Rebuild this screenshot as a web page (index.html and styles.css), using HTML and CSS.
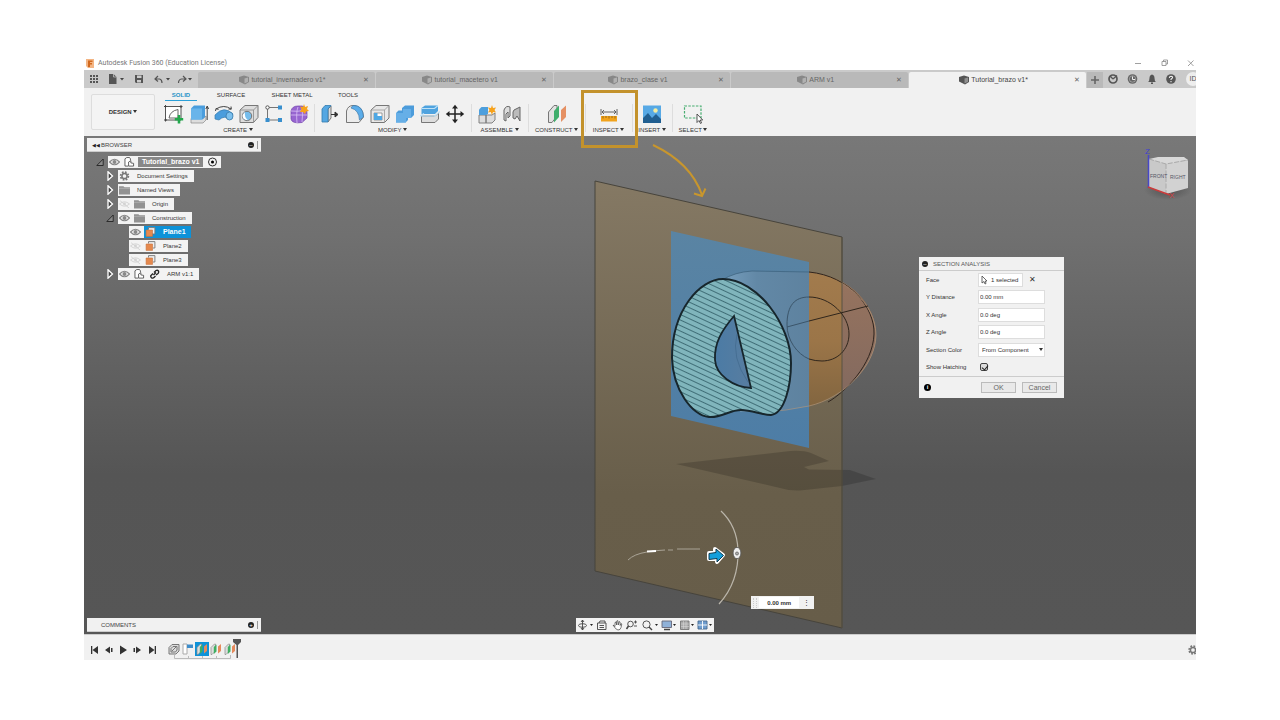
FILE: index.html
```html
<!DOCTYPE html>
<html lang="en">
<head>
<meta charset="utf-8">
<title>Autodesk Fusion 360 (Education License)</title>
<link rel="stylesheet" href="styles.css">
</head>
<body>
<svg class="defs" aria-hidden="true">
  <symbol id="cube" viewBox="0 0 10 10"><path d="M0 2 5 0.5 10 2V7L6 9.5 0 6.5Z" fill="currentColor"/><path d="M5.5 3.5 9 2.6V6.7L5.5 8.6Z" fill="#fff" opacity=".35"/></symbol>
  <symbol id="eye" viewBox="0 0 10 8"><path d="M.5 4Q5-1 9.500 4 5 9 .5 4Z" fill="none" stroke="#888" stroke-width="1.100"/><circle cx="5" cy="4" r="1.800" fill="#888"/></symbol>
  <symbol id="eye-off" viewBox="0 0 10 8"><path d="M.5 4Q5 0 9.500 4 5 8 .5 4ZM1 1 9 7.500" fill="none" stroke="#d3d3d3" stroke-width=".9"/><circle cx="5" cy="4" r="1.300" fill="#d3d3d3"/></symbol>
  <symbol id="folder" viewBox="0 0 10 9"><path d="M0 1H4L5 2H10V8.500H0Z" fill="#929292"/><path d="M0 3H10" stroke="#bbb" stroke-width=".6"/></symbol>
  <symbol id="comp" viewBox="0 0 12 11"><path d="M4.500 10H1V2L3 .6H6L7 2V3.500M5 5.500 7.500 4V6.500L10.500 7V10H5Z" fill="#fff" stroke="#444" stroke-width=".9"/></symbol>
  <symbol id="plane" viewBox="0 0 10 10"><path d="M3 2.500V.6H9.400V7H7.500" fill="#eee" stroke="#777" stroke-width=".9"/><path d="M.6 3H7V9.400H.6Z" fill="#e5894e" stroke="#c9713b" stroke-width=".6"/></symbol>
  <symbol id="gear" viewBox="0 0 10 10"><circle cx="5" cy="5" r="3.900" fill="none" stroke="#777" stroke-width="1.700" stroke-dasharray="1.700 1.360"/><circle cx="5" cy="5" r="2.600" fill="none" stroke="#777" stroke-width="1.500"/></symbol>
  <symbol id="closed" viewBox="0 0 8 10"><path d="M2 .8 6.500 5 2 9.200Z" fill="#444" stroke="#fff" stroke-width="1.300"/></symbol>
  <symbol id="open" viewBox="0 0 8 10"><path d="M.8 8.500 7.200 2V8.500Z" fill="#888" stroke="#222" stroke-width=".9"/></symbol>
  <symbol id="feat" viewBox="0 0 12 12"><path d="M1 4.500 4.500 1H5.500V8L2 11.500H1Z" fill="#ddd" stroke="#888" stroke-width=".7"/><path d="M3.800 4 6.500 1.500V8.500L3.800 11Z" fill="#3fae62"/><path d="M8 3.500 11 1V8L8 10.500Z" fill="#e58a5c"/></symbol>
</svg>
<main class="app">
  <header class="titlebar">
    <svg class="logo" viewBox="0 0 8 9"><path d="M0 0H8V9H2L0 7Z" fill="#f3b584"/><path d="M2 1.500H6.500V3H4V4H6V5.500H4V8H2Z" fill="#d2691e"/></svg>
    <span class="caption">Autodesk Fusion 360 (Education License)</span>
    <svg class="winbtns" viewBox="0 0 60 10" fill="none" stroke="#888" stroke-width=".8"><path d="M1 5.500H7M28 3.500H32V7.500H28ZM29.500 3.500V2H33.500V6H32M54 2.500 59.500 8M59.500 2.500 54 8"/></svg>
  </header>

  <nav class="tabbar">
    <div class="quick">
      <svg viewBox="0 0 114 18"><path d="M6 5h2v2H6zM9 5h2v2H9zM12 5h2v2h-2zM6 8h2v2H6zM9 8h2v2H9zM12 8h2v2h-2zM6 11h2v2H6zM9 11h2v2H9zM12 11h2v2h-2z" fill="#555"/><path d="M25 4H29.500L32.500 7V14H25Z" fill="#555"/><path d="M29.500 4V7H32.500" fill="none" stroke="#ccc" stroke-width=".7"/><path d="M36 8H40L38 10.500ZM82 8H86L84 10.500ZM104 8H108L106 10.500Z" fill="#444"/><path d="M51 5H59V13H52L51 12Z" fill="#555"/><path d="M53 5.500H57.500V8H53ZM53 10H57V12.500H53Z" fill="#ccc"/><path d="M74 6 71 9 74 11.500M71 9H75.500Q78 9.500 78 13M99 6 102 9 99 11.500M102 9H97.500Q94.500 9.500 94.500 13" fill="none" stroke="#555" stroke-width="1.200"/></svg>
    </div>
    <div class="tab"><svg class="i10"><use href="#cube"/></svg><span>tutorial_invernadero v1*</span><button class="x" aria-label="Close">✕</button></div>
    <div class="tab"><svg class="i10"><use href="#cube"/></svg><span>tutorial_macetero v1</span><button class="x" aria-label="Close">✕</button></div>
    <div class="tab"><svg class="i10"><use href="#cube"/></svg><span>brazo_clase v1</span><button class="x" aria-label="Close">✕</button></div>
    <div class="tab"><svg class="i10"><use href="#cube"/></svg><span>ARM v1</span><button class="x" aria-label="Close">✕</button></div>
    <div class="tab current"><svg class="i10"><use href="#cube"/></svg><span>Tutorial_brazo v1*</span><button class="x" aria-label="Close">✕</button></div>
    <button class="plus" aria-label="New tab"><svg viewBox="0 0 8 8"><path d="M4 0V8M0 4H8" stroke="#666" stroke-width="1.600"/></svg></button>
    <div class="status">
      <svg viewBox="0 0 90 18"><circle cx="9" cy="9" r="4" fill="none" stroke="#555" stroke-width="1.700"/><path d="M9 9 13 5.500M6 6 9 9" stroke="#555" stroke-width="1.300"/><circle cx="28.500" cy="9" r="4.800" fill="#666"/><circle cx="28.500" cy="9" r="3.200" fill="none" stroke="#bbb" stroke-width=".6"/><path d="M28.500 6.500V9.500H31" fill="none" stroke="#eee"/><path d="M44 12Q45.500 11 45.500 8 45.500 5 48 4.500 50.500 5 50.500 8 50.500 11 52 12ZM47 12.500H49V14H47Z" fill="#555"/><circle cx="67" cy="9" r="4.800" fill="#555"/><path d="M65.300 8Q65.500 6.200 67 6.200 68.800 6.400 68.500 7.800L67 9.300V10M67 11V12.200" fill="none" stroke="#eee" stroke-width="1.100"/></svg>
      <span class="avatar">ID</span>
    </div>
  </nav>

  <section class="ribbon">
    <button class="design">DESIGN <i class="caret"></i></button>
    <div class="tools">
      <div class="subtabs"><button class="sub on">SOLID</button><button class="sub">SURFACE</button><button class="sub wide">SHEET METAL</button><button class="sub">TOOLS</button></div>
      <div class="groups">
        <div class="group create"><div class="icons">
          <svg viewBox="0 0 20 20"><path d="M1.500 2.500H17V16H1.500Z" fill="#fff" stroke="#555"/><path d="M5 14Q6 7 14 5.500V14Z" fill="none" stroke="#555" stroke-width=".9"/><path d="M0 2.500H3M1.500 1V4M15.500 2.500H18.500M17 1V4M0 16H3M1.500 14.500V17.500" stroke="#444"/><path d="M15 11V19.500M10.800 15.200H19.200" stroke="#22a84c" stroke-width="2.600"/></svg>
          <svg viewBox="0 0 20 20"><path d="M2 14.500H14L17 12V16L14 19H2Z" fill="#ddd" stroke="#888" stroke-width=".7"/><path d="M2 4.500 5 1.500H16V13L13.500 15.500H2Z" fill="#4a9ddd"/><path d="M2 4.500H13V15.500H2Z" fill="#69b4ea"/><path d="M18.200 16V3M16.800 5 18.200 2 19.600 5" fill="none" stroke="#333" stroke-width=".9"/></svg>
          <svg viewBox="0 0 20 20"><path d="M1 11Q10 1 19 10L16 15Q10 11 5 16L1 15Z" fill="#4a9ddd" stroke="#397cae" stroke-width=".7"/><ellipse cx="15.500" cy="12" rx="3.500" ry="4" fill="#7bc0ee" stroke="#3979a8" stroke-width=".8"/><path d="M2 5Q10 0 17 5M1.500 7 2 4.500 4.500 5.500M14.500 5 17.300 5.200 17 2.500" fill="none" stroke="#444"/></svg>
          <svg viewBox="0 0 20 20"><path d="M1 6 6 1.500H19V13.500L14.500 18.500H1Z" fill="#ddd" stroke="#777"/><path d="M1 6H14.500V18.500M14.500 6 19 1.500" fill="none" stroke="#888" stroke-width=".8"/><circle cx="8" cy="12" r="4.700" fill="#76bdec" stroke="#777"/><path d="M6 8Q5 13 9 16.300 3 16 3.500 11Z" fill="#fff"/></svg>
          <svg viewBox="0 0 20 20"><path d="M4 3.500H15M3.500 4V16M4 16H15" fill="none" stroke="#666" stroke-width=".9"/><circle cx="3.500" cy="3.500" r="1.700" fill="#fff" stroke="#555"/><path d="M14 1.500H18V5.500H14ZM1.500 14H5.500V18H1.500ZM14 14H18V18H14Z" fill="#388fce"/></svg>
          <svg viewBox="0 0 20 20"><path d="M2 7Q3 2 9 2H13Q18 3 18 9V14L13 18.500Q3 20 2 15Z" fill="#9765d0" stroke="#7445ae" stroke-width=".7"/><path d="M2 11H18M9 3Q7 8 8 19M13 5Q14 10 13 18M2 7Q8 8 17 6" fill="none" stroke="#dac2f6" stroke-width=".8"/><path d="M15 0 16 3 19 2 18 5 20 7 17 7.500 16 10 14 8 11 8 12.500 5 11 2.500 14 3Z" fill="#f7a21b"/></svg>
        </div><button class="label">CREATE <i class="caret"></i></button></div>
        <div class="group modify"><div class="icons">
          <svg viewBox="0 0 20 20"><path d="M8 5 11 2V14L8 18Z" fill="#ddd" stroke="#777"/><path d="M2 5 5 1.500H11L8 5V18H2Z" fill="#55a7e2" stroke="#347baf" stroke-width=".8"/><path d="M11 10.500H17M15 8 18 10.500 15 13Z" fill="#333" stroke="#333"/></svg>
          <svg viewBox="0 0 20 20"><path d="M1.500 7Q3 1.500 8 1.500H10Q18 3 18.500 13L14 18.500H1.500Z" fill="#ececec" stroke="#777"/><path d="M8 1.500Q18 1 18.500 13L14.500 16Q14 6 6 4Z" fill="#5badea" stroke="#417baa" stroke-width=".7"/></svg>
          <svg viewBox="0 0 20 20"><path d="M1 6 6 1.500H19V14L14.500 18.500H1Z" fill="#e8e8e8" stroke="#777"/><path d="M14.500 18V6H1M14.500 6 19 1.500" stroke="#999" fill="none" stroke-width=".8"/><path d="M4 9H12V16H4Z" fill="#fff" stroke="#888" stroke-width=".8"/><path d="M4 9H7.500V12H12V16H4Z" fill="#4fa8e4"/></svg>
          <svg viewBox="0 0 20 20"><path d="M1 9 3.500 6.500H7V4L10 1.500H19V11L16 14H13V16L10.500 18.500H1Z" fill="#4c9cdb"/><path d="M1 9H8V5H16V14H11V18.500H1Z" fill="#66afe7"/></svg>
          <svg viewBox="0 0 20 20"><path d="M1.500 12H15L18.500 9V15L15 18.500H1.500Z" fill="#ddd" stroke="#777"/><path d="M1.500 4 5 1.500H18V7L15 10H1.500Z" fill="#4fa3df"/><path d="M1.500 4.500H14.500L18 1.500M0 12 4 9.500M14 12.500 20 7.500M1 12H15" stroke="#bde1f7" fill="none" stroke-width="1.200"/></svg>
          <svg viewBox="0 0 20 20"><path d="M10 3V17M3 10H17" stroke="#222" stroke-width="1.500"/><path d="M10 .8 13 4.500H7ZM10 19.200 13 15.500H7ZM.8 10 4.500 7V13ZM19.200 10 15.500 7V13Z" fill="#222"/></svg>
        </div><button class="label">MODIFY <i class="caret"></i></button></div>
        <div class="group"><div class="icons">
          <svg viewBox="0 0 20 20"><path d="M2 11H9V19H2ZM9 11H15L18 9V16L15 19H9Z" fill="#ddd" stroke="#777" stroke-width=".9"/><path d="M2 5.500 4.500 3H11V9.500L9.500 11H2Z" fill="#4d9fdd"/><path d="M15 1 16 4 19 3.500 17.500 6 19 8.500 16 8 15 11 13.800 8 11 8.500 12.500 6 11 3.500 14 4Z" fill="#f7a21b"/></svg>
          <svg viewBox="0 0 20 20"><path d="M2 6Q4 1 8 3V12L6 14V8L4 10V17L2 16Z" fill="#ddd" stroke="#666"/><path d="M18 3 12 6 11 8V14L13 15 15 12 18 17Z" fill="#bbb" stroke="#666"/></svg>
        </div><button class="label">ASSEMBLE <i class="caret"></i></button></div>
        <div class="group"><div class="icons"><svg viewBox="0 0 20 20"><path d="M1.500 8 7 1.500H10V12L5 18.500H1.500Z" fill="#e2e2e2" stroke="#777"/><path d="M7 7 12 1.500V13L7 18.500Z" fill="#3fae6c"/><path d="M14 6 19 1.500V13L14 18Z" fill="#e59063"/></svg></div><button class="label">CONSTRUCT <i class="caret"></i></button></div>
        <div class="group inspect"><div class="icons"><svg viewBox="0 0 20 20"><path d="M2 5V11M18 5V11M3 8H17M5 6 3 8 5 10M15 6 17 8 15 10" fill="none" stroke="#555" stroke-width=".9"/><path d="M2 12H18V17.500H2Z" fill="#f1a31c"/><path d="M4 12V14.500M7 12V14M10 12V14.500M13 12V14M16 12V14.500" stroke="#865d17" stroke-width=".8"/></svg></div><button class="label">INSPECT <i class="caret"></i></button><div class="marker"></div></div>
        <div class="group insert"><div class="icons"><svg viewBox="0 0 20 20"><path d="M1 1.500H19V19H1Z" fill="#57a9e5"/><path d="M1 14 6 9 10 14 14 10 19 15V19H1Z" fill="#215f91"/><circle cx="13.500" cy="6.500" r="2.200" fill="#f4eda2"/></svg></div><button class="label">INSERT <i class="caret"></i></button></div>
        <div class="group select"><div class="icons"><svg viewBox="0 0 20 20"><path d="M1.500 2H18V14H1.500Z" fill="none" stroke="#47ad70" stroke-width="1.200" stroke-dasharray="2.500 1.300"/><path d="M14 10V18.500L16 16.500 17.500 19.500 18.500 19 17.300 16H19.700Z" fill="#fff" stroke="#444" stroke-width=".9"/></svg></div><button class="label">SELECT <i class="caret"></i></button></div>
      </div>
    </div>
  </section>

  <section class="canvas">
    <svg class="scene" viewBox="84 136 1112 498">
      <defs>
        <linearGradient id="tan" x1="0" y1="0" x2="0" y2="1"><stop offset="0" stop-color="#857964"/><stop offset=".7" stop-color="#685e4a"/><stop offset="1" stop-color="#675d49"/></linearGradient>
        <linearGradient id="skin" x1="0" y1="0" x2="0" y2="1"><stop offset="0" stop-color="#a27b4d"/><stop offset=".5" stop-color="#9b7548"/><stop offset="1" stop-color="#80643f"/></linearGradient>
        <linearGradient id="skinout" x1="0" y1="0" x2="0" y2="1"><stop offset="0" stop-color="#98745e"/><stop offset="1" stop-color="#80685f"/></linearGradient>
        <linearGradient id="blue" x1="0" y1="0" x2="0" y2="1"><stop offset="0" stop-color="#5a84a3"/><stop offset="1" stop-color="#4d7da6"/></linearGradient>
        <linearGradient id="hollow" x1="0" y1="0" x2="1" y2="0"><stop offset="0" stop-color="#4b7ba5"/><stop offset="1" stop-color="#587da0"/></linearGradient>
        <linearGradient id="sheen" x1="0" y1="0" x2="1" y2="0"><stop offset="0" stop-color="#779fbe"/><stop offset=".4" stop-color="#6288a6"/><stop offset="1" stop-color="#5e829f"/></linearGradient>
        <pattern id="hatch" width="20" height="5" patternUnits="userSpaceOnUse" patternTransform="rotate(25)"><rect width="20" height="5" fill="#80b5bc"/><path d="M0 2.500H20" stroke="#305c66" stroke-width=".8"/></pattern>
        <clipPath id="past"><path d="M842 237H900V450H842Z"/></clipPath>
        <clipPath id="inblue"><path d="M671 231 809 262V448L671 416Z"/></clipPath>
        <radialGradient id="glow" cx=".5" cy=".5" r=".5"><stop offset="0" stop-opacity=".3"/><stop offset="1" stop-opacity="0"/></radialGradient>
      </defs>
      <path d="M595 181 842 237V628L595 571Z" fill="url(#tan)" stroke="#47443c"/>
      <path d="M676 464 790 451Q803 450 811 453L829 461 804 467 809 469.500 850 470 876 479 842 486 800 490.500Q790 491 780 488Z" opacity=".17"/>
      <path d="M722 280Q735 272 752 271L809 272C850 276 876 305 876 335 876 365 844 398 809 406Q785 411 740 412Z" fill="url(#skin)"/>
      <path d="M722 280Q735 272 752 271L809 272C850 276 876 305 876 335 876 365 844 398 809 406Q785 411 740 412Z" fill="url(#skinout)" clip-path="url(#past)"/>
      <path d="M671 231 809 262V448L671 416Z" fill="url(#blue)"/>
      <path d="M722 280Q735 272 752 271L809 272V406Q785 411 740 412Z" fill="url(#sheen)" clip-path="url(#inblue)"/>
      <path d="M722 280Q735 272 752 271L809 272" fill="none" stroke="#3f6580" stroke-width=".8"/>
      <path d="M809 272C850 276 875 308 874 334 873 365 844 393 828 402" fill="none" stroke="#30251e"/>
      <path d="M842 283C865 298 876 316 876 336 875 366 844 398 809 406Q785 411 765 412" fill="none" stroke="#b3977c" stroke-width=".8" opacity=".8"/>
      <path d="M842 237V628" stroke="#595343"/>
      <path d="M809 359C797 354 787 340 787 325 787 305 795 297 809 297M787 327 809 321" fill="none" stroke="#3b556a"/>
      <path d="M809 297C830 297 849 315 849 334 849 350 837 361 822 361Q815 361 809 359M809 321 868 306" fill="none" stroke="#30261c"/>
      <path d="M723 279C700 279 672 310 672 358 673 390 692 415 709 417 722 418 729 410 741 410 752 410 762 415 771 415 785 413 791 385 791 363 791 325 757 279 723 279Z" fill="url(#hatch)" stroke="#17262c" stroke-width="2"/>
      <path d="M734 316C722 330 714 343 715 360 716 375 733 387 751 388Z" fill="url(#hollow)" stroke="#17262c" stroke-width="1.800"/>
      <path d="M737 334Q731 358 748 382" fill="none" stroke="#41688c" stroke-width=".7"/>
      <path d="M653 145Q691 163 702 195M694 193.500 702 196 705.500 188.500" fill="none" stroke="#c8962d" stroke-width="2"/>
      <g fill="none" stroke="#bab5aa"><path d="M721 511Q737 526 738 550Q739 582 719 604" stroke-width="1.200"/><path d="M628 560Q634 554 647 552M652 551 665 550M668 550H673M677 549H700" stroke-width=".8"/><path d="M647 551.500 656 551" stroke="#fff" stroke-width="2"/></g>
      <path d="M709 553H715V549L723 555 717 562V559H709Z" fill="#fff" stroke="#fff" stroke-width="4" stroke-linejoin="round"/><path d="M709 553.500 716 552.500V549L723.500 555.500 717 562V558.500L709 559.500Z" fill="#149fdc" stroke="#113b50"/>
      <ellipse cx="737" cy="553" rx="3.900" ry="5.600" fill="#eee" stroke="#555" stroke-width=".8"/><circle cx="737" cy="553.500" r="1.500" fill="#aaa" stroke="#666" stroke-width=".8"/>
      <ellipse cx="1168" cy="190" rx="24" ry="10" fill="url(#glow)"/>
      <path d="M1149 159 1158 157H1184L1188 160 1166 165Z" fill="#d8d8d8"/><path d="M1149 159 1166 164V194L1149 187Z" fill="#c9c9c9"/><path d="M1166 164 1188 160V188L1166 194Z" fill="#d2d2d2"/><path d="M1149 159 1166 164 1188 160M1166 164V194" fill="none" stroke="#aaa" stroke-dasharray="5 1.500"/>
      <path d="M1148.500 155V188" stroke="#4747c8" stroke-width="1.500"/><path d="M1148 187 1170 195" stroke="#cb3a3a" stroke-width="1.500"/>
      <g class="axes"><text x="1145" y="154" fill="#4141cf">Z</text><text x="1169" y="198" fill="#d23d3d">X</text></g>
      <g class="faces"><text x="1150" y="178">FRONT</text><text x="1170" y="179">RIGHT</text></g>
    </svg>

    <aside class="browser">
      <div class="panelhead"><span class="rew">◀◀</span><span>BROWSER</span><i class="dot">–</i><i class="grip"></i></div>
      <ul class="tree">
        <li><svg class="tw"><use href="#open"/></svg><div class="node"><svg class="ic"><use href="#eye"/></svg><svg class="ic"><use href="#comp"/></svg><span class="root">Tutorial_brazo v1</span><svg class="ic" viewBox="0 0 10 10"><circle cx="5" cy="5" r="4" fill="none" stroke="#333"/><circle cx="5" cy="5" r="1.500"/></svg></div></li>
        <li class="l1"><svg class="tw"><use href="#closed"/></svg><div class="node"><svg class="ic"><use href="#gear"/></svg><span>Document Settings</span></div></li>
        <li class="l1"><svg class="tw"><use href="#closed"/></svg><div class="node"><svg class="ic"><use href="#folder"/></svg><span>Named Views</span></div></li>
        <li class="l1"><svg class="tw"><use href="#closed"/></svg><div class="node"><svg class="ic"><use href="#eye-off"/></svg><svg class="ic"><use href="#folder"/></svg><span>Origin</span></div></li>
        <li class="l1"><svg class="tw"><use href="#open"/></svg><div class="node"><svg class="ic"><use href="#eye"/></svg><svg class="ic"><use href="#folder"/></svg><span>Construction</span></div></li>
        <li class="l2"><div class="node"><svg class="ic"><use href="#eye"/></svg><div class="picked"><svg class="ic"><use href="#plane"/></svg><span>Plane1</span></div></div></li>
        <li class="l2"><div class="node"><svg class="ic"><use href="#eye-off"/></svg><svg class="ic"><use href="#plane"/></svg><span>Plane2</span></div></li>
        <li class="l2"><div class="node"><svg class="ic"><use href="#eye-off"/></svg><svg class="ic"><use href="#plane"/></svg><span>Plane3</span></div></li>
        <li class="l1"><svg class="tw"><use href="#closed"/></svg><div class="node"><svg class="ic"><use href="#eye"/></svg><svg class="ic"><use href="#comp"/></svg><svg class="ic" viewBox="0 0 10 10"><path d="M4 6 6.500 3.500M4.500 3.500 6.500 1.500Q8 .8 9 2 9.500 3.500 8.500 4.500L6.500 6M3.500 4.500 1.500 6.500Q.7 7.500 2 8.800 3.500 9.500 4.500 8.500L6 7" fill="none" stroke="#222" stroke-width="1.300"/></svg><span>ARM v1:1</span></div></li>
      </ul>
    </aside>

    <form class="dialog">
      <h2><i class="dot">–</i>SECTION ANALYSIS</h2>
      <div class="fields">
        <div class="row"><label for="face">Face</label><button type="button" id="face" class="pick"><svg viewBox="0 0 8 10"><path d="M1 1V8L3 6.500 4 9 5 8.500 4.300 6H6Z" fill="#fff" stroke="#444" stroke-width=".8"/></svg>1 selected</button><button type="button" class="clear" aria-label="Clear">✕</button></div>
        <div class="row"><label for="yd">Y Distance</label><input id="yd" value="0.00 mm"></div>
        <div class="row"><label for="xa">X Angle</label><input id="xa" value="0.0 deg"></div>
        <div class="row"><label for="za">Z Angle</label><input id="za" value="0.0 deg"></div>
        <div class="row"><label for="sc">Section Color</label><div class="selwrap"><select id="sc"><option>From Component</option></select><i class="caret"></i></div></div>
        <div class="row"><label for="sh">Show Hatching</label><input type="checkbox" id="sh" checked></div>
      </div>
      <footer><span class="info">i</span><button type="button" class="btn">OK</button><button type="button" class="btn">Cancel</button></footer>
    </form>

    <div class="distance"><i class="grab"></i><input aria-label="Distance" value="0.00 mm"><button aria-label="More">⋮</button></div>

    <div class="navbar">
      <svg viewBox="0 0 138 14" fill="none" stroke="#444" stroke-width=".9"><ellipse cx="6.500" cy="7.500" rx="4" ry="1.800"/><path d="M6.500 2V12M5 4 6.500 2 8 4M5 10 6.500 12 8 10"/><path d="M21.500 5H30V11.500H21.500ZM23 5 24 3H29V5M23.500 7.500H28M23.500 9.500H28"/><path d="M37 7 39 8.500V4.500L40 4 40.700 7V3L41.700 2.500 42.300 7 43 3.500 44 4 44.200 7.500 45 5.500 45.800 6 45 9.500Q44.500 12 42 12 40 12 37 7Z" fill="#fff" stroke-width=".7"/><circle cx="54.500" cy="6" r="2.800"/><path d="M52.500 8 50.500 11" stroke-width="1.500"/><path d="M58 4H61M59.500 2.500V5.500M58 8H61"/><circle cx="70.500" cy="6.500" r="3.600"/><path d="M73 9 76 12" stroke-width="1.400"/><path d="M86 3H95.500V9.500H86Z" fill="#8fb1d8" stroke="#667"/><path d="M88 11.500H94" stroke-width="1.500"/><path d="M104.500 3H113V11.500H104.500Z" fill="#aaa" stroke="#777"/><path d="M107.500 3V11M110 3V11M105 6H113M105 8.500H113" stroke="#ddd" stroke-width=".5"/><path d="M122 3H131V11H122Z" fill="#6f9dce" stroke="#46698f"/><path d="M126.500 3V11M122 7H131" stroke="#fff"/><path d="M14 6H17L15.500 8ZM79 6H82L80.500 8ZM97 6H100L98.500 8ZM115 6H118L116.500 8ZM133 6H136L134.500 8Z" fill="#222" stroke="none"/></svg>
    </div>

    <div class="panelhead comments"><span>COMMENTS</span><i class="dot">+</i><i class="grip"></i></div>
  </section>

  <footer class="timeline">
    <svg class="play" viewBox="0 0 70 12" fill="#333"><path d="M0 2H1.300V10H0ZM7 2V10L1.500 6ZM19 2.500V9.500L14 6ZM20 4H21.500V8H20ZM29 1.500 36 6 29 10.500ZM45 2.500 50 6 45 9.500ZM42.500 4H44V8H42.500ZM58 2 63.500 6 58 10ZM63.700 2H65V10H63.700Z"/></svg>
    <div class="feats">
      <svg viewBox="0 0 12 12"><path d="M1 4.500 4 1.500H11V8L8 11H1Z" fill="#ddd" stroke="#777"/><path d="M3 5.500 5 3.500H9V7L7.500 9H3ZM4 8 8 4" fill="none" stroke="#777"/></svg>
      <svg viewBox="0 0 12 12"><path d="M1 1H5V11H1Z" fill="#fff" stroke="#aaa"/><path d="M5 1.500H11V5H5Z" fill="#3e8dca"/></svg>
      <svg class="sel"><use href="#feat"/></svg><svg><use href="#feat"/></svg><svg><use href="#feat"/></svg>
      <svg class="head" viewBox="0 0 8 20"><path d="M0 0H8V3L5 6V19H3.500V6L0 3Z" fill="#555"/></svg>
      <svg class="rail" viewBox="0 0 58 4"><path d="M.5 0V3.500H56.500V0M14.500 1V3.500M28.500 1V3.500M42.500 1V3.500" fill="none" stroke="#bbb"/></svg>
    </div>
    <svg class="cog"><use href="#gear"/></svg>
  </footer>
</main>
</body>
</html>
```

FILE: styles.css
```css
* { box-sizing: border-box; }
body { margin: 0; padding: 56px 84px 60px; background: #fff; font: 7px/10px "Liberation Sans", Arial, sans-serif; color: #333; }
button, input, select { font: inherit; color: inherit; margin: 0; padding: 0; border: 0; background: none; border-radius: 0; }
svg { display: block; flex: none; }
i { font-style: normal; }
.defs { position: absolute; width: 0; height: 0; }
.app { display: flex; flex-direction: column; min-height: calc(100vh - 116px); overflow: hidden; }
.caret { display: inline-block; border: 2px solid transparent; border-top: 3px solid #333; border-bottom: 0; vertical-align: 1px; }

.titlebar { display: flex; align-items: center; height: 14px; padding: 0 2px; gap: 4px; }
.logo { width: 8px; height: 9px; }
.caption { flex: 1; color: #777; font-family: Roboto, sans-serif; }
.winbtns { width: 60px; height: 10px; }

.tabbar { display: flex; align-items: flex-end; height: 18px; background: #cacaca; gap: 1px; }
.quick { width: 113px; }
.quick svg { width: 114px; height: 18px; }
.tab { flex: 1; display: flex; align-items: center; height: 16px; padding: 0 5px; background: #b9b9b9; color: #666; border-radius: 2px 2px 0 0; }
.tab .i10 { margin-left: auto; color: #888; }
.tab span { margin-left: 2px; }
.i10 { width: 10px; height: 10px; }
.x { margin-left: auto; width: 8px; font-size: 7px; color: #666; }
.tab.current { background: #f1f1f1; color: #444; }
.tab.current .i10 { color: #555; }
.plus { width: 16px; height: 16px; background: #b9b9b9; display: grid; place-items: center; }
.plus svg { width: 8px; height: 8px; }
.status { width: 92px; display: flex; align-items: center; overflow: hidden; }
.status svg { width: 90px; height: 18px; }
.avatar { flex: none; width: 14px; height: 14px; margin-left: -8px; border-radius: 7px; background: #eee; text-align: center; line-height: 14px; color: #555; }

.ribbon { display: flex; gap: 7px; padding: 1px 7px 0; height: 48px; background: #f1f1f1; }
.design { width: 64px; height: 36px; margin-top: 5px; border: 1px solid #ddd; border-radius: 2px; background: #f4f4f4; font-weight: bold; font-size: 6px; white-space: nowrap; }
.subtabs { display: flex; height: 12px; }
.sub { width: 56px; font-size: 6px; }
.sub.wide { width: 66px; }
.sub:last-child { width: 46px; }
.sub.on { width: 32px; margin: 0 6px 0 3px; color: #2492c7; border-bottom: 1px solid #2ca0d8; font-weight: bold; }
.groups { display: flex; }
.group { position: relative; width: 57px; padding-top: 3px; display: flex; flex-direction: column; align-items: center; }
.group + .group::before { content: ""; position: absolute; left: 0; top: 3px; height: 28px; border-left: 1px solid #ddd; }
.create { width: 152px; align-items: flex-start; }
.create .label { align-self: center; }
.modify { width: 157px; }
.inspect { width: 47px; }
.insert { width: 40px; }
.select { width: 42px; }
.icons { display: flex; gap: 5px; padding: 0 2px; }
.icons svg { width: 20px; height: 20px; }
.label { height: 12px; font-size: 6px; white-space: nowrap; }
.marker { position: absolute; z-index: 2; left: -4px; top: -11px; width: 57px; height: 58px; border: 3px solid #c3922c; }

.canvas { position: relative; flex: 1; min-height: 498px; background: linear-gradient(#787878, #707070 20%, #555 68%, #565656); }
.scene { position: absolute; width: 100%; height: 100%; }
.axes { font-size: 8px; }
.faces { font-size: 5px; fill: #556; }
.panelhead { display: flex; align-items: center; height: 14px; padding: 0 2px 0 5px; background: #f1f1f1; color: #444; font-size: 6px; border-bottom: 1px solid #ccc; }
.rew { width: 9px; font-size: 5px; color: #222; }
.dot { width: 6px; height: 6px; border-radius: 3px; background: #222; color: #fff; line-height: 6px; text-align: center; }
.panelhead .dot { margin-left: auto; margin-right: 3px; }
.grip { height: 8px; width: 2px; border-left: 1px solid #999; }
.browser { position: absolute; left: 3px; top: 2px; width: 174px; }
.comments { position: absolute; left: 3px; bottom: 2px; width: 174px; padding-left: 14px; }
.tree { list-style: none; margin: 4px 0 0; padding: 0 0 0 8px; font-size: 6px; }
.tree li { display: flex; align-items: center; height: 12px; margin-bottom: 2px; gap: 3px; }
.tree .l1 { padding-left: 10px; }
.tree .l2 { padding-left: 34px; }
.tw { width: 10px; height: 10px; }
.node { display: flex; align-items: center; height: 12px; padding: 0 6px 0 1px; gap: 4px; background: #f3f3f3; white-space: nowrap; }
.ic { width: 11px; height: 10px; }
.node span { padding-left: 3px; }
.node .root { margin-left: -1px; background: #888; color: #fff; padding: 0 4px; font-weight: bold; font-size: 7px; }
.root + .ic { margin-right: -3px; }
.picked { display: flex; align-items: center; gap: 4px; height: 12px; padding: 0 5px 0 1px; margin: 0 -6px 0 -1px; background: #0d92d8; color: #fff; font-weight: bold; font-size: 7px; }

.dialog { position: absolute; right: 132px; top: 121px; width: 145px; min-height: 141px; display: flex; flex-direction: column; background: #f1f1f1; font-size: 6px; }
.dialog h2 { display: flex; align-items: center; gap: 5px; height: 14px; margin: 0; padding: 0 3px; font: inherit; color: #555; border-bottom: 1px solid #ccc; }
.fields { flex: 1; display: flex; flex-direction: column; justify-content: space-between; padding: 1px 7px; }
.row { display: flex; align-items: center; height: 15px; }
.row label { width: 52px; }
.row > input:not([type=checkbox]), .selwrap { width: 67px; height: 14px; padding: 0 1px; background: #fff; border: 1px solid #ddd; }
.pick { display: flex; align-items: center; gap: 2px; width: 45px; height: 14px; padding: 0 2px; background: #fff; border: 1px solid #ddd; white-space: nowrap; }
.pick svg { width: 8px; height: 10px; }
.clear { width: 18px; font-size: 8px; }
.selwrap { display: flex; align-items: center; justify-content: space-between; }
select { appearance: none; padding-left: 2px; }
input[type=checkbox] { appearance: none; width: 8px; height: 8px; margin-left: 2px; border: 1px solid #444; border-radius: 2px; background: #ddd; }
input[type=checkbox]:checked::after { content: ""; display: block; width: 3px; height: 5px; margin-left: 2px; border: solid #222; border-width: 0 1px 1px 0; transform: rotate(40deg); }
.dialog footer { display: flex; align-items: center; gap: 6px; height: 22px; padding: 0 7px 0 5px; border-top: 1px solid #ccc; }
.info { width: 7px; height: 7px; margin-right: auto; border-radius: 4px; background: #000; color: #fff; font-weight: bold; font-size: 6px; line-height: 7px; text-align: center; }
.btn { width: 35px; height: 11px; border: 1px solid #bbb; background: #e9e9e9; color: #666; font-size: 7px; }

.distance { position: absolute; left: 60%; bottom: 25px; width: 63px; height: 13px; display: flex; align-items: center; background: #f1f1f1; }
.distance input { width: 40px; height: 11px; background: #fff; text-align: center; font-weight: bold; font-size: 6px; }
.distance button { flex: 1; }
.grab { width: 4px; height: 10px; margin: 0 2px; border: dotted #ccc; border-width: 0 1px; }
.navbar { position: absolute; left: 492px; bottom: 2px; width: 138px; background: #f3f3f3; }
.navbar svg { width: 138px; height: 14px; }

.timeline { display: flex; height: 26px; padding: 0 0 0 7px; background: #f1f1f1; border-top: 1px solid #ccc; overflow: hidden; }
.play { width: 70px; height: 12px; margin: 9px 7px 0 0; }
.feats { position: relative; display: flex; gap: 2px; padding-top: 8px; }
.feats svg { width: 12px; height: 12px; }
.feats .sel { background: #0d92d8; outline: 1px solid #0d92d8; }
.feats .head { width: 8px; height: 20px; margin: -4px 0 0 -5px; }
.feats .rail { position: absolute; left: 6px; top: 20px; width: 58px; height: 4px; }
.cog { width: 10px; height: 10px; margin: 10px -2px 0 auto; }
```
